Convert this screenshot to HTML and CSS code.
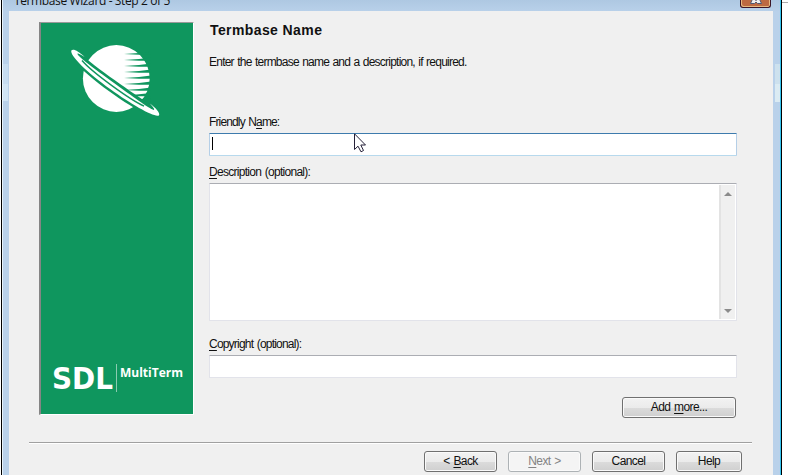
FILE: index.html
```html
<!DOCTYPE html>
<html lang="en">
<head>
<meta charset="utf-8">
<title>Termbase Wizard</title>
<link rel="stylesheet" href="styles.css">
</head>
<body>
<div class="desktop">
  <div class="edge-left"></div>
  <div class="window">
    <header class="titlebar">
      <span class="caption">Termbase Wizard - Step 2 of 5</span>
      <span class="close"><svg width="12" height="6" viewBox="0 0 12 6"><path d="M3 -2L6 0.5L9 -2L11.5 3.5H7.5L6 2L4.500 3.500H.5Z" fill="#eee" stroke="#525870"/></svg></span>
    </header>
    <div class="client">
      <div class="page">
        <aside class="banner">
          <svg width="152" height="391" viewBox="41 23 152 391">
            <circle cx="116.300" cy="78.500" r="33.400" fill="#fff"/>
            <g fill="#0f965e">
              <path d="M151 51.800L139 52.900L124 54L139 54.700H151Z"/>
              <path d="M151 57.500L139 58.900L124 60L139 60.800H151Z"/>
              <path d="M151 63.500L139 64.900L124 66L139 66.800H151Z"/>
              <path d="M151 69.500L139 70.900L124 72L139 72.800H151Z"/>
              <path d="M151 75.500L139 76.900L124 78L139 78.800H151Z"/>
              <path d="M151 81.500L139 82.900L124 84L139 84.800H151Z"/>
              <path d="M151 87.500L139 88.900L124 90L139 90.800H151Z"/>
              <path d="M151 93L139 94.200L127 95.500L139 96.200H151Z"/>
              <path d="M151 98.700L140 99L134 100L150 104Z"/>
            </g>
            <g transform="translate(115.300 82.700) rotate(36)">
              <path d="M-46 -3C-25 -.8 20 -1.800 44 -3L44 7C25 11.800 -25 11.800 -46 7Z" fill="#0f965e"/>
              <path d="M-54.500 -.5C-54 5 -28 8.200 0 8.200S54 5 54.500 .5C54 -2.300 47 -3.500 40 -3.500C46 -2.500 48 -1.500 47 -.5C43 1 20 1 0 1S-42 1 -47 -.7C-49 -1.700 -46 -2.500 -40 -2.800C-48 -4 -54 -3 -54.500 -.5Z" fill="#fff"/>
              <path d="M-40 1.600C-25 5.200 22 5.200 37 2" fill="none" stroke="#0f965e" stroke-width="1.400"/>
            </g>
            <text class="sdl" x="52" y="388.500" textLength="61" lengthAdjust="spacingAndGlyphs">SDL</text>
            <path d="M116.500 364V392" stroke="#8bcbb0"/>
            <text class="product" x="120" y="376.500" textLength="63" lengthAdjust="spacingAndGlyphs">MultiTerm</text>
          </svg>
        </aside>
        <main class="form">
          <h1><span>Termbase Name</span></h1>
          <p class="intro">Enter the termbase name and a description, if required.</p>
          <div class="label friendly">Friendly N<u>a</u>me:</div>
          <div class="field focused"><i class="caret"></i></div>
          <div class="label description"><u>D</u>escription (optional):</div>
          <div class="field area">
            <div class="scrollbar">
              <svg width="8" height="4" viewBox="0 0 8 4"><path d="M0 4L4 0L8 4Z" fill="#8b8b8b"/></svg>
              <svg width="8" height="4" viewBox="0 0 8 4"><path d="M0 0H8L4 4Z" fill="#8b8b8b"/></svg>
            </div>
          </div>
          <div class="label copyright"><u>C</u>opyright (optional):</div>
          <div class="field"></div>
          <button class="more">Add <u>m</u>ore...</button>
        </main>
      </div>
      <hr>
      <footer class="actions">
        <button class="back">&lt; <u>B</u>ack</button>
        <button class="next" disabled><u>N</u>ext &gt;</button>
        <button class="cancel">Cancel</button>
        <button class="help">Help</button>
      </footer>
    </div>
  </div>
  <div class="edge-right"></div>
</div>
<svg class="pointer" width="14" height="21" viewBox="0 0 14 21"><path d="M.5 .8V16.500L4 13.200L7 18.800L9.500 17.500L6.800 12H11.500Z" fill="#fff" stroke="#252038"/></svg>
</body>
</html>
```
FILE: styles.css
```css
* { box-sizing: border-box; }
body {
  margin: 0;
  width: 788px;
  height: 475px;
  overflow: hidden;
  background: #fff;
  font: 12px/14px "Liberation Sans", Arial, sans-serif;
  color: #111;
}
.desktop { display: flex; height: 475px; }
.edge-left { width: 3px; background: linear-gradient(90deg, #fff 1px, #000 1px 2px, #e8f4fc 2px); }
.edge-right { flex: 1; background: linear-gradient(#fff 2px, #aaa 2px 3px, #fff 3px); }
.window {
  width: 779px;
  padding: 0 8px 0 6px;
  border-right: 1px solid #000;
  background:
    linear-gradient(#35c4ef, #35c4ef) 777px 0 / 1px 475px no-repeat,
    linear-gradient(#cde1ee 20px, #dbebf3 20px) 772px 64px / 5px 38px no-repeat,
    linear-gradient(#c6dcf0 20px, #d0e4f4 20px) 0 64px / 5px 37px no-repeat,
    linear-gradient(#aec8e2, #b9d1ea 12px);
}
.titlebar { display: flex; justify-content: space-between; height: 11px; }
.caption {
  margin: -8px 0 0 5px;
  height: 19px;
  font: 12px/17px "Open Sans", sans-serif;
  letter-spacing: -.38px;
  white-space: nowrap;
}
.close {
  display: flex;
  justify-content: center;
  width: 31px;
  height: 8px;
  margin-right: 2px;
  border: 1px solid #3b1527;
  border-top: 0;
  border-radius: 0 0 3px 3px;
  background: #bd6941;
  box-shadow: inset 1px -1px #e5b77f, inset -1px 0 #e5b77f;
}
.client { height: 464px; padding: 11px 0 0 20px; background: #f0f0f0; }
.page { display: flex; margin-left: 10px; height: 420px; }
.banner {
  width: 155px;
  height: 393px;
  border: 1px solid #fff;
  border-left: 2px solid #858585;
  border-top-color: #999;
  background: #0f965e;
}
.banner svg { display: block; }
.sdl { font: bold 30px "DejaVu Sans", sans-serif; fill: #fff; }
.product { font: bold 13px "Open Sans", sans-serif; fill: #fff; }
.form { display: flex; flex-direction: column; width: 528px; margin-left: 15px; }
h1 { margin: 0 0 0 1px; height: 33px; font: bold 14px/17px "Liberation Sans", sans-serif; letter-spacing: .4px; }
.intro { margin: 0; height: 60px; letter-spacing: -.77px; word-spacing: .8px; white-space: nowrap; }
.label { letter-spacing: -.72px; word-spacing: 1px; white-space: nowrap; }
.friendly { height: 18px; letter-spacing: -.86px; }
.description { margin-top: 9px; height: 18px; }
.copyright { margin-top: 16px; height: 18px; letter-spacing: -.8px; }
u { text-decoration: underline; text-underline-offset: 2px; text-decoration-thickness: 1px; text-decoration-skip-ink: none; }
.field {
  height: 23px;
  border: 1px solid #e2e3ea;
  border-top-color: #abadb3;
  border-radius: 1px;
  background: #fff;
}
.focused { border-color: #3d7bad #b5cfe7 #b7d9ed; }
.caret { display: block; width: 1px; height: 13px; margin: 3px 0 0 2px; background: #000; }
.area { display: flex; justify-content: flex-end; height: 138px; padding: 1px; }
.scrollbar {
  display: flex;
  flex-direction: column;
  justify-content: space-between;
  align-items: center;
  width: 16px;
  padding: 7px 0 6px;
  border-left: 2px solid #e3e3e3;
  background: #f0f0f0;
}
button {
  height: 21px;
  padding: 0 0 1px;
  border: 1px solid #707070;
  border-radius: 3px;
  background: linear-gradient(#f2f2f2, #ebebeb 50%, #dcdcdc 50%, #cfcfcf);
  box-shadow: inset 0 0 0 1px #fafafa;
  font: inherit;
  line-height: 18px;
  color: #111;
  letter-spacing: -.6px;
  word-spacing: 1px;
}
.more { align-self: flex-end; width: 114px; margin: 19px 1px 0 0; }
hr { width: 723px; height: 2px; margin: 0; border: 0; border-top: 1px solid #a0a0a0; background: #fff; }
.actions { display: flex; gap: 11px; margin: 7px 0 0 395px; }
.actions button { width: 73px; }
.actions .help { width: 66px; }
.actions .next { border-color: #adb2b5; background: #f4f4f4; color: #838383; }
.pointer { position: absolute; left: 354px; top: 133px; }
```
